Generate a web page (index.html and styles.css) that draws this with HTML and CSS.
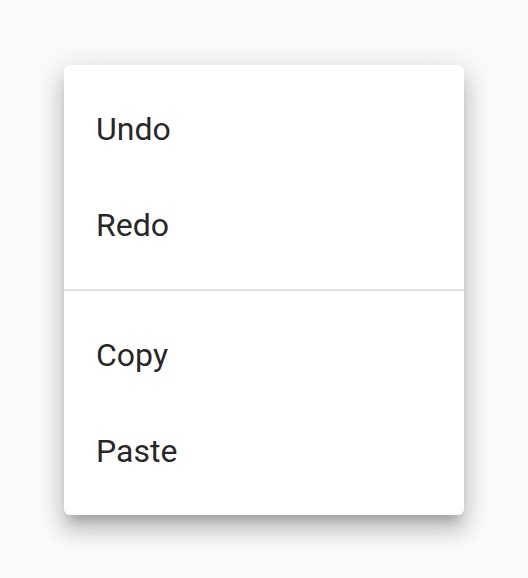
FILE: index.html
```html
<!DOCTYPE html>
<html>
<head>
<meta charset="utf-8">
<link rel="stylesheet" href="styles.css">
</head>
<body>
<div class="stage">
  <div class="menu">
    <div class="group">
      <div class="item">Undo</div>
      <div class="item">Redo</div>
    </div>
    <div class="divider"></div>
    <div class="group">
      <div class="item">Copy</div>
      <div class="item">Paste</div>
    </div>
  </div>
</div>
</body>
</html>
```
FILE: styles.css
```css
html, body {
  margin: 0;
  padding: 0;
  background: #fafafa;
}
.stage {
  width: 528px;
  height: 578px;
  padding: 65px 0 0 64px;
  box-sizing: border-box;
}
.menu {
  width: 400px;
  background: #ffffff;
  border-radius: 6px;
  box-shadow: 0 10px 10px -6px rgba(0,0,0,0.2), 0 16px 20px 2px rgba(0,0,0,0.14), 0 6px 28px 4px rgba(0,0,0,0.12);
  display: flex;
  flex-direction: column;
}
.group {
  padding: 16px 0;
  display: flex;
  flex-direction: column;
}
.item {
  height: 96px;
  display: flex;
  align-items: center;
  padding: 0 32px;
  font-family: Roboto, "Liberation Sans", sans-serif;
  font-size: 32px;
  color: rgba(0,0,0,0.87);
}
.divider {
  height: 2px;
  background: #e0e0e0;
}
```
